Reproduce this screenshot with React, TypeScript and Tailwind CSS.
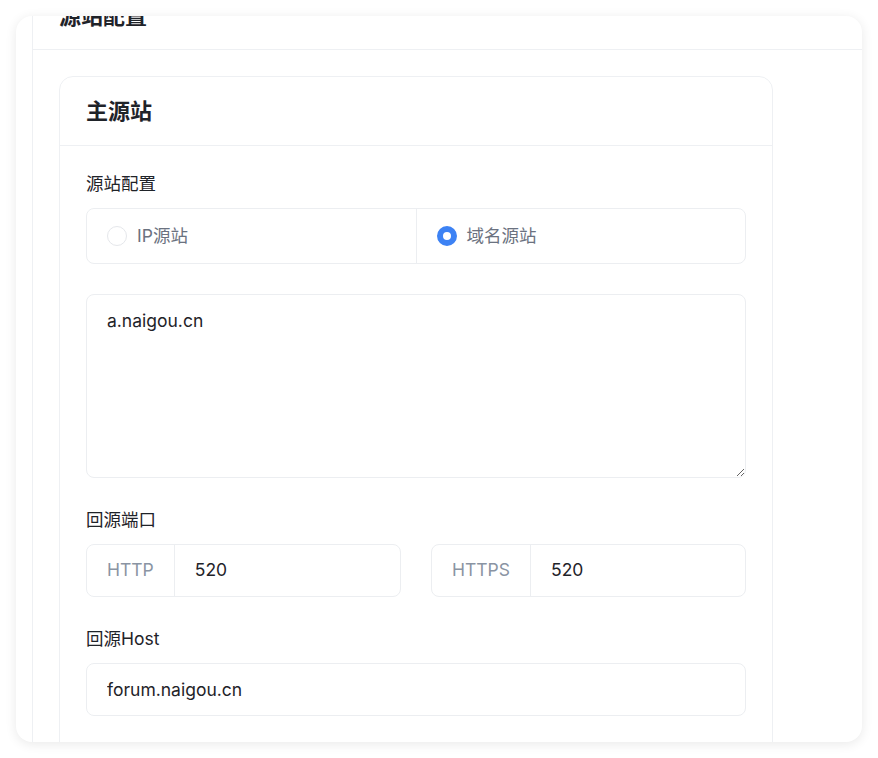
import React, { useState } from 'react';

const font = "font-['Inter','Noto_Sans_CJK_SC',sans-serif]";

const FieldLabel: React.FC<{ children: React.ReactNode }> = ({ children }) => (
  <div className="text-[17.5px] leading-[24px] text-[#1f2329]">{children}</div>
);

const Radio: React.FC<{ checked: boolean; label: string; onClick: () => void; divider?: boolean }> = ({
  checked,
  label,
  onClick,
  divider,
}) => (
  <button
    type="button"
    onClick={onClick}
    className={`flex flex-1 items-center gap-[10px] px-5 text-left ${divider ? 'border-r border-[#eceef1]' : ''}`}
  >
    {checked ? (
      <span className="h-5 w-5 rounded-full border-[6px] border-[#3d82f4] bg-white" />
    ) : (
      <span className="h-5 w-5 rounded-full border border-[#e5e7eb] bg-white" />
    )}
    <span className="text-[17.5px] text-[#6b7280]">{label}</span>
  </button>
);

const PortInput: React.FC<{ prefix: string; value: string }> = ({ prefix, value }) => (
  <div className="flex h-[53px] overflow-hidden rounded-lg border border-[#eceef1]">
    <div className="flex items-center border-r border-[#eceef1] px-5 text-[17.5px] text-[#8a94a3]">{prefix}</div>
    <input
      defaultValue={value}
      className="min-w-0 flex-1 px-5 text-[17.5px] text-[#1f2329] outline-none"
    />
  </div>
);

export default function App() {
  const [kind, setKind] = useState<'ip' | 'domain'>('domain');

  return (
    <div className={`min-h-screen bg-white p-4 ${font}`}>
      <div className="h-[726px] overflow-hidden rounded-2xl bg-white shadow-[0_2px_12px_rgba(0,0,0,0.09)]">
        <div className="ml-4 mt-[-33px] border-l border-[#eef0f3]">
          {/* Section header — scrolled partly out of view */}
          <div className="border-b border-[#eef0f3] px-[26px] py-[17px]">
            <h2 className="text-[22px] leading-[32px] font-bold text-[#1f2329]">源站配置</h2>
          </div>

          <div className="py-[26px] pl-[26px] pr-[89px]">
            {/* 主源站 card */}
            <div className="rounded-[14px] border border-[#eef0f3]">
              <div className="flex h-[69px] items-center border-b border-[#eef0f3] px-[26px]">
                <h3 className="text-[22px] font-bold text-[#1f2329]">主源站</h3>
              </div>

              <div className="flex flex-col gap-[30px] p-[26px] pb-[80px]">
                <div className="flex flex-col gap-3">
                  <FieldLabel>源站配置</FieldLabel>
                  <div className="flex h-[56px] rounded-lg border border-[#eceef1]">
                    <Radio checked={kind === 'ip'} label="IP源站" onClick={() => setKind('ip')} divider />
                    <Radio checked={kind === 'domain'} label="域名源站" onClick={() => setKind('domain')} />
                  </div>
                </div>

                <textarea
                  defaultValue="a.naigou.cn"
                  className="block h-[184px] w-full rounded-lg border border-[#eceef1] px-5 py-[14px] text-[17.5px] leading-[24px] text-[#1f2329] outline-none"
                />

                <div className="flex flex-col gap-3">
                  <FieldLabel>回源端口</FieldLabel>
                  <div className="grid grid-cols-2 gap-[30px]">
                    <PortInput prefix="HTTP" value="520" />
                    <PortInput prefix="HTTPS" value="520" />
                  </div>
                </div>

                <div className="flex flex-col gap-3">
                  <FieldLabel>回源Host</FieldLabel>
                  <input
                    defaultValue="forum.naigou.cn"
                    className="h-[53px] w-full rounded-lg border border-[#eceef1] px-5 text-[17.5px] text-[#1f2329] outline-none"
                  />
                </div>
              </div>
            </div>
          </div>
        </div>
      </div>
    </div>
  );
}
